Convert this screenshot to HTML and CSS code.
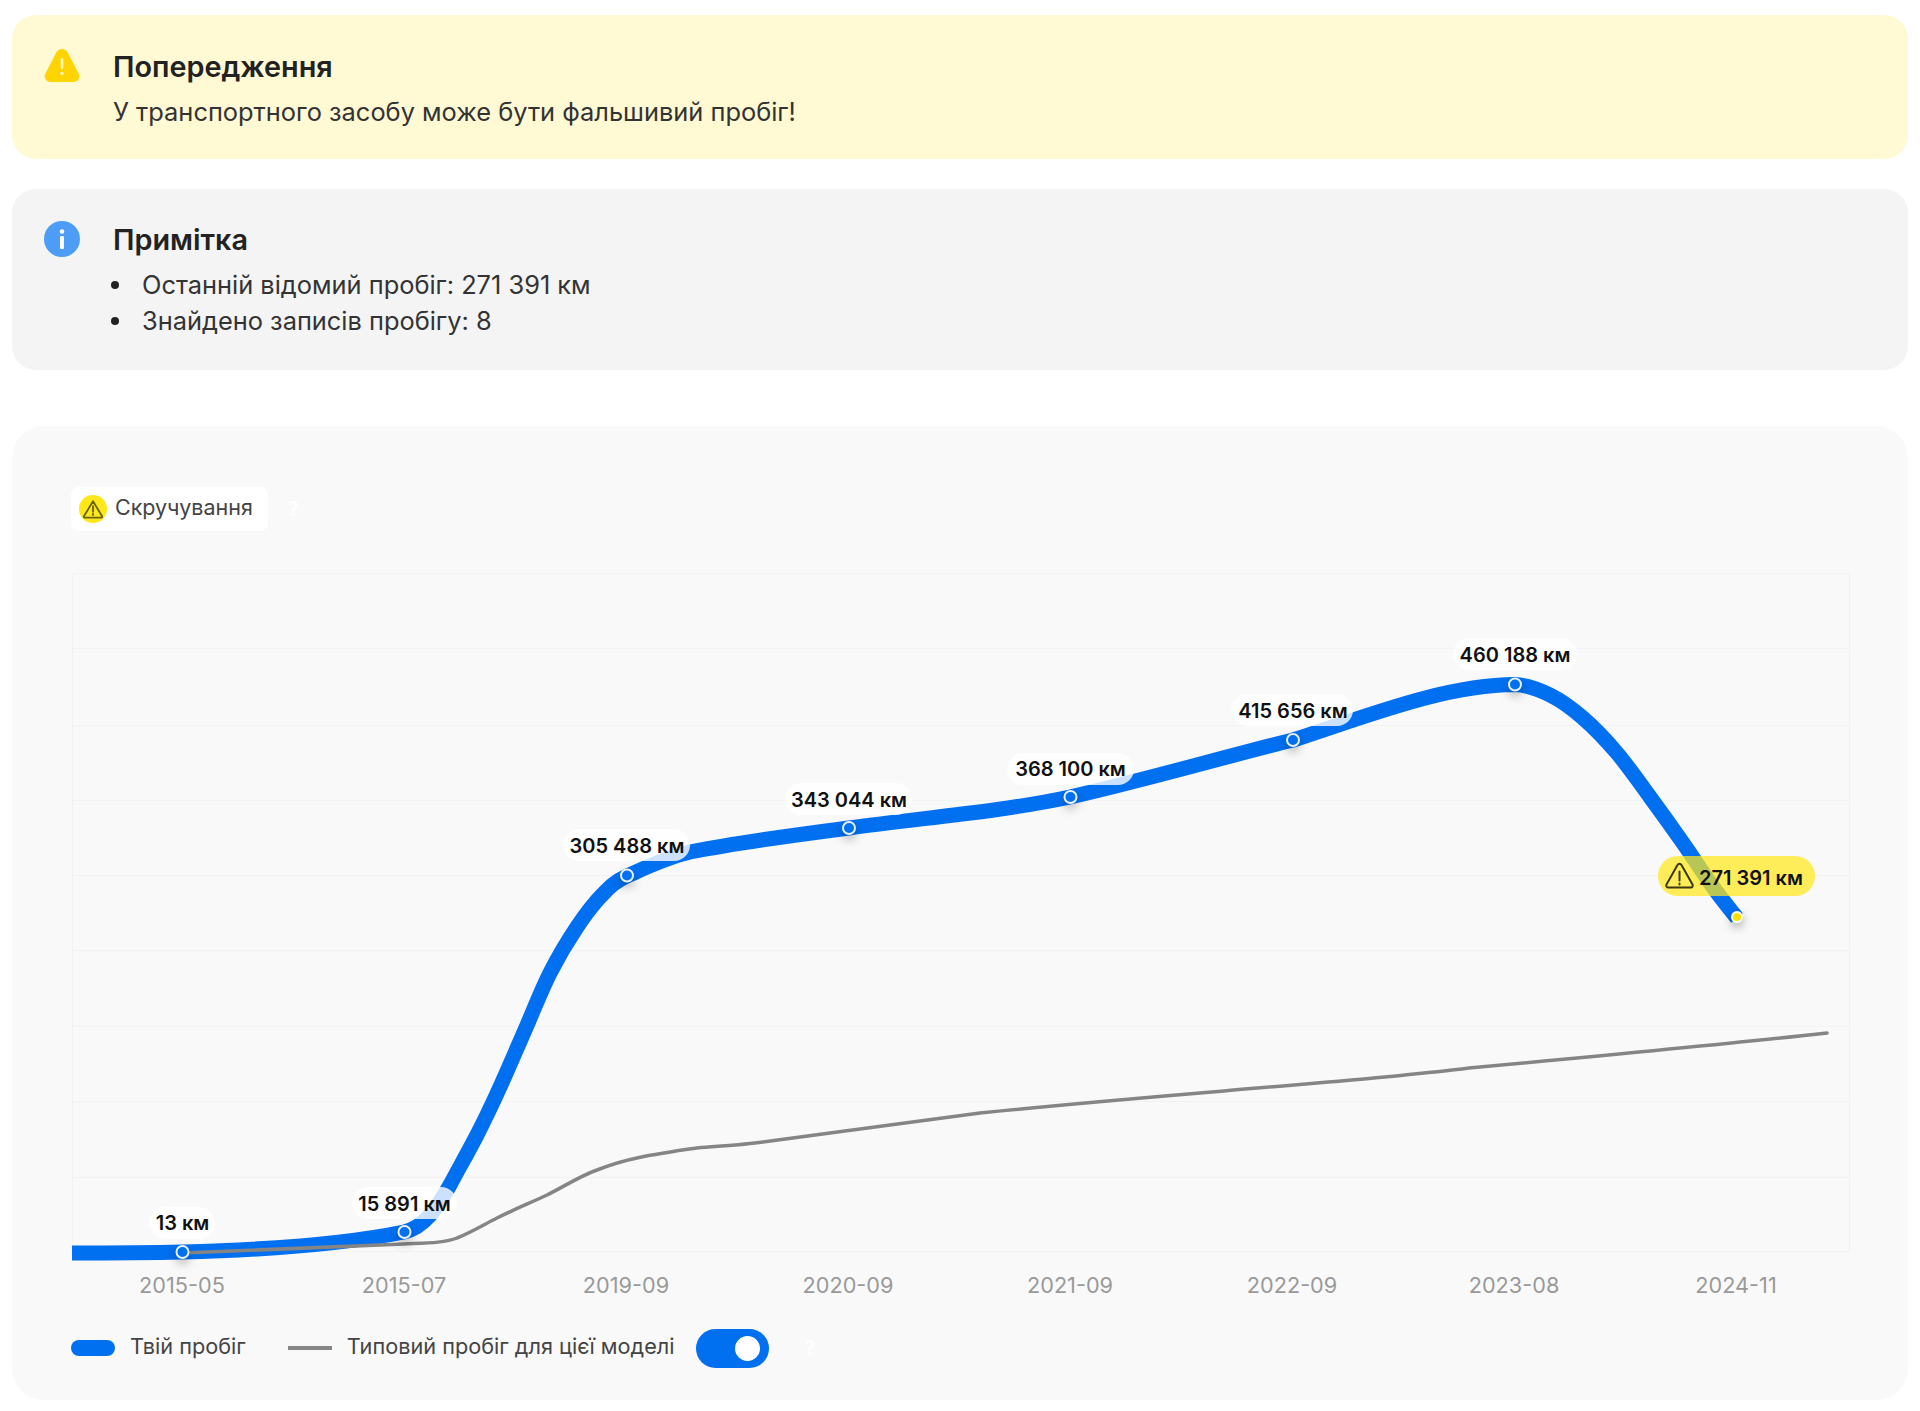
FILE: index.html
```html
<!DOCTYPE html>
<html lang="uk">
<head>
<meta charset="utf-8">
<title>Пробіг</title>
<link rel="stylesheet" href="styles.css">
</head>
<body>
<main class="page">
  <section class="alert alert-warn">
    <svg class="alert-icon" viewBox="0 0 36 34"><path class="warn-fill" d="M18 0c2.800 0 4.500 1.500 5.800 3.800l10.800 20.600c2 4-.4 8.600-5 8.600H6.400c-4.600 0-7-4.600-5-8.600L12.200 3.800C13.500 1.500 15.200 0 18 0z"/><rect class="warn-mark" x="16.700" y="9" width="2.600" height="11" rx="1.300"/><circle class="warn-mark" cx="18" cy="24.500" r="1.700"/></svg>
    <div class="alert-body">
      <h2 class="alert-title">Попередження</h2>
      <p class="alert-text">У транспортного засобу може бути фальшивий пробіг!</p>
    </div>
  </section>

  <section class="alert alert-note">
    <svg class="alert-icon" viewBox="0 0 36 36"><circle class="info-fill" cx="18" cy="18" r="18"/><circle class="info-mark" cx="18" cy="10.500" r="2.300"/><rect class="info-mark" x="16" y="15" width="4" height="13" rx="1.200"/></svg>
    <div class="alert-body">
      <h2 class="alert-title">Примітка</h2>
      <ul class="alert-list">
        <li>Останній відомий пробіг: 271 391 км</li>
        <li>Знайдено записів пробігу: 8</li>
      </ul>
    </div>
  </section>

  <section class="chart-card">
    <div class="status-row">
      <div class="status-badge">
        <span class="status-dot">
          <svg class="status-tri" viewBox="0 0 24 22"><path d="M12 2.500 22 19a1 1 0 0 1-.9 1.500H2.900A1 1 0 0 1 2 19z"/><path d="M12 8v6M12 16.500v1"/></svg>
        </span>
        Скручування
      </div>
      <span class="help-mark">?</span>
    </div>

    <svg class="chart" viewBox="71 560 1779 745" width="1779" height="745">
      <g class="grid">
        <path d="M72 573.500H1849M72 648.500H1849M72 725.500H1849M72 800.500H1849M72 875.500H1849M72 950.500H1849M72 1026.500H1849M72 1101.500H1849M72 1177.500H1849M72 1251.500H1849M72.500 573V1252M1849.500 573V1252"/>
      </g>
      <path class="line-mine" d="M72 1253C100 1253 140 1253 182.500 1252C260 1250 340 1245 404 1232C425 1227 437 1208 450 1185C457.500 1170.800 469.700 1149.300 478 1133C486.300 1116.700 492.200 1104.200 500 1087C507.800 1069.800 516.700 1049 525 1030C533.300 1011 541.300 990.200 550 973C558.700 955.800 568.300 940 577 927C585.700 914 593.700 903.500 602 895C610.300 886.500 614 882.200 627 876C645 868 665 858 690 852C740 842 795 835 849 828C920 818 1000 812 1070 797C1145 780 1220 758 1293 740C1370 715 1445 685 1515 684.500C1527 685 1538.700 689.500 1550 695C1561.300 700.500 1571.800 708.300 1583 718C1594.200 727.700 1605.800 739.800 1617 753C1628.200 766.200 1639 782 1650 797C1661 812 1672.500 828 1683 843C1693.500 858 1704 874.500 1713 887C1722 899.500 1729 908 1737 918"/>
      <path class="line-typical" d="M182 1253C260 1250 340 1247 404 1244C425 1243 445 1243 457 1238C470 1233 485 1224 497 1218C515 1209 530 1203 547 1195C565 1186 580 1176 597 1170C610 1165 622 1161 637 1158C655 1154 675 1151 697 1148C720 1146 742 1145 763 1142C785 1139 808 1136 830 1133C880 1126 930 1120 980 1113C1060 1105 1140 1098 1224 1091C1300 1084 1390 1078 1469 1068C1600 1056 1720 1045 1827 1033"/>

      <g class="markers">
        <circle cx="182.500" cy="1252" r="6"/>
        <circle cx="404.500" cy="1232" r="6"/>
        <circle cx="627" cy="875.500" r="6"/>
        <circle cx="849" cy="828" r="6"/>
        <circle cx="1070.500" cy="797" r="6"/>
        <circle cx="1293" cy="740" r="6"/>
        <circle cx="1515" cy="684.500" r="6"/>
      </g>
      <circle class="marker-end" cx="1737" cy="917" r="5"/>

      <g class="labels">
        <rect x="149" y="1207" width="66" height="32" rx="16"/>
        <rect x="352" y="1187" width="105" height="32" rx="16"/>
        <rect x="563" y="829" width="127" height="32" rx="16"/>
        <rect x="785" y="783" width="127" height="32" rx="16"/>
        <rect x="1007" y="753" width="127" height="32" rx="16"/>
        <rect x="1231" y="694" width="122" height="32" rx="16"/>
        <rect x="1453" y="638" width="124" height="32" rx="16"/>
      </g>
      <g class="label-text">
        <text x="182.500" y="1230">13 км</text>
        <text x="404.500" y="1211">15 891 км</text>
        <text x="627" y="852.500">305 488 км</text>
        <text x="849" y="806.500">343 044 км</text>
        <text x="1070.500" y="776">368 100 км</text>
        <text x="1293" y="718">415 656 км</text>
        <text x="1515" y="662">460 188 км</text>
      </g>

      <rect class="label-warn" x="1658" y="856" width="157" height="40" rx="20"/>
      <path class="label-warn-icon" d="M1681.500 865 1692.500 884.500a2 2 0 0 1-1.700 3H1668.200a2 2 0 0 1-1.700-3L1677.500 865a2.300 2.300 0 0 1 4 0zM1679.500 871.500v9M1679.500 883.500v1"/>
      <text class="label-warn-text" x="1699" y="884.500">271 391 км</text>

      <g class="axis">
        <text x="182" y="1293">2015-05</text>
        <text x="404" y="1293">2015-07</text>
        <text x="626" y="1293">2019-09</text>
        <text x="848" y="1293">2020-09</text>
        <text x="1070" y="1293">2021-09</text>
        <text x="1292" y="1293">2022-09</text>
        <text x="1514" y="1293">2023-08</text>
        <text x="1736" y="1293">2024-11</text>
      </g>
    </svg>

    <div class="legend">
      <span class="legend-pill"></span>
      <span class="legend-text legend-mine">Твій пробіг</span>
      <span class="legend-line"></span>
      <span class="legend-text">Типовий пробіг для цієї моделі</span>
      <span class="toggle"><span class="toggle-knob"></span></span>
      <span class="help-mark legend-help">?</span>
    </div>
  </section>
</main>
</body>
</html>
```
FILE: styles.css
```css
* { box-sizing: border-box; }
html, body { margin: 0; background: #fff; }
body { font-family: Inter, "Noto Sans", sans-serif; color: #222; }

.page { padding: 15px 12px 0; display: flex; flex-direction: column; }

.alert { display: flex; border-radius: 24px; padding: 36px 32px 0; }
.alert-warn { background: #fff9d4; height: 144px; }
.alert-note { background: #f4f4f4; height: 181px; margin-top: 30px; padding-top: 35px; }
.alert-icon { width: 36px; height: 36px; flex: none; margin-top: -3px; }
.alert-body { margin-left: 33px; }
.alert-title { margin: 0; font-size: 28.800px; line-height: 32px; font-weight: 600; color: #222; }
.alert-text { margin: 13px 0 0; font-size: 25.400px; line-height: 32px; color: #333; }
.alert-list { margin: 11px 0 0; padding: 0; list-style: none; font-size: 25.400px; line-height: 36px; color: #333; }
.alert-list li { display: flex; align-items: center; }
.alert-list li::before { content: ""; width: 8px; height: 8px; margin: 0 23px 0 -2px; border-radius: 50%; background: #222; }
.warn-fill { fill: #ffd400; }
.warn-mark { fill: #fff6c0; }
.info-fill { fill: #4d9cf6; }
.info-mark { fill: #fff; }

.chart-card { margin-top: 56px; height: 974px; background: #f9f9f9; border-radius: 32px; padding: 61px 59px 0; }
.status-row { display: flex; align-items: center; height: 44px; }
.status-badge { display: flex; align-items: center; width: 197px; height: 44px; padding: 0 0 4px 8px; background: #fff; border-radius: 8px; font-size: 21.500px; color: #444; }
.status-dot { width: 28px; height: 28px; margin: 4px 8px 0 0; border-radius: 50%; background: #ffe81a; display: flex; align-items: center; justify-content: center; }
.status-tri { width: 22px; height: 20px; fill: none; stroke: #6a640f; stroke-width: 2; stroke-linejoin: round; stroke-linecap: round; }
.help-mark { margin-left: 20px; font-size: 20px; font-weight: 600; color: #fff; }

.chart { display: block; margin-top: 29px; overflow: visible; }
.grid path { fill: none; stroke: #f2f2f2; stroke-width: 1; }
.line-mine { fill: none; stroke: #006ff0; stroke-width: 15; }
.line-typical { fill: none; stroke: #858585; stroke-width: 3.500; stroke-linecap: round; }
.markers circle { fill: #006ff0; stroke: #e8f0fb; stroke-width: 2; filter: drop-shadow(0 5px 5px rgba(0,0,0,.25)); }
.marker-end { fill: #ffe000; stroke: #fff; stroke-width: 2; filter: drop-shadow(0 4px 5px rgba(0,0,0,.35)); }
.labels rect { fill: #fff; fill-opacity: .8; }
.label-text text { font-size: 20px; font-weight: 600; fill: #111; text-anchor: middle; }
.label-warn { fill: #ffe81a; fill-opacity: .72; }
.label-warn-icon { fill: none; stroke: #3b3812; stroke-width: 2; stroke-linecap: round; stroke-linejoin: round; }
.label-warn-text { font-size: 20px; font-weight: 600; fill: #111; }
.axis text { font-size: 21.700px; fill: #999; text-anchor: middle; }

.legend { display: flex; align-items: center; height: 40px; margin-top: 23px; }
.legend-pill { width: 44px; height: 16px; border-radius: 8px; background: #006ff0; }
.legend-line { width: 44px; height: 3.500px; background: #858585; margin-left: 42px; }
.legend-text { font-size: 21.700px; color: #444; margin: 0 0 5px 15px; }
.toggle { width: 73px; height: 39px; margin-left: 21px; border-radius: 20px; background: #006ff0; display: flex; align-items: center; justify-content: flex-end; padding-right: 9px; }
.toggle-knob { width: 25px; height: 25px; border-radius: 50%; background: #fff; }
.legend-help { margin-left: 36px; }
```
